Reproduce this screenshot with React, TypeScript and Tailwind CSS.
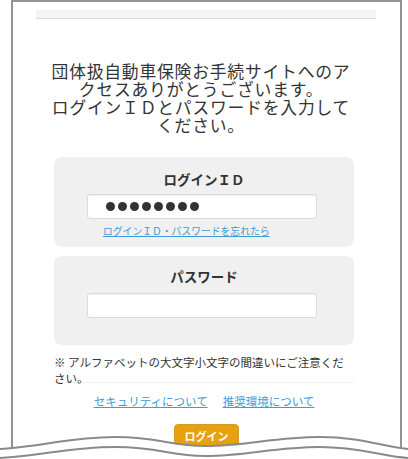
const PAGE_FONT = "font-['Noto_Sans_CJK_JP','Noto_Sans',sans-serif]";

const PasswordDots = ({ count }: { count: number }) => (
  <div className="flex items-center gap-[3px]">
    {Array.from({ length: count }).map((_, index) => (
      <span key={index} className="block h-[9px] w-[9px] rounded-full bg-[#333]" />
    ))}
  </div>
);

const TornEdge = () => (
  <svg
    className="absolute bottom-0 left-0"
    width="408"
    height="40"
    viewBox="0 419 408 40"
    fill="none"
  >
    <path
      d="M0 449 C40 447 70 437 115 437 C160 437 170 446 205 446 C245 446 275 437 320 437 C360 437 380 446 408 449 L408 460 L0 460 Z"
      fill="#fff"
    />
    <path
      d="M0 449 C40 447 70 437 115 437 C160 437 170 446 205 446 C245 446 275 437 320 437 C360 437 380 446 408 449"
      stroke="#8a8a8a"
      strokeWidth="2"
    />
    <path
      d="M0 458 C40 456 70 447 115 447 C160 447 170 456 205 456 C245 456 275 447 320 447 C360 447 380 456 408 458"
      stroke="#8a8a8a"
      strokeWidth="2"
    />
  </svg>
);

const GREETING =
  "団体扱自動車保険お手続サイトへのアクセスありがとうございます。\nログインＩＤとパスワードを入力してください。";

export default function App() {
  return (
    <div className={`relative h-[459px] w-[408px] overflow-hidden bg-white text-[#333] ${PAGE_FONT}`}>
      <div className="ml-[11px] h-[459px] w-[391px] border-x-2 border-t-2 border-[#939393]">
        <div className="ml-[23px] mt-[8px] h-[9px] w-[340px] border-b border-[#d9d9d9] bg-[#f5f5f5]" />

        <p className="ml-[37px] mt-[43px] w-[302px] whitespace-pre-line text-center text-[16.8px] leading-[18px] tracking-[0.8px]">
          {GREETING}
        </p>

        <div className="ml-[41px] mt-[23px] h-[90px] w-[300px] rounded-[8px] bg-[#f0f0f0] pt-[14px]">
          <p className="text-center text-[13.5px] font-bold leading-[16px]">ログインＩＤ</p>
          <div className="ml-[33px] mt-[7px] flex h-[25px] w-[230px] items-center rounded-[3px] border border-[#d5dbe0] bg-white pl-[18px] shadow-[inset_0_1px_1px_rgba(0,0,0,0.06)]">
            <PasswordDots count={8} />
          </div>
          <a className="ml-[49px] mt-[6px] block text-[9.8px] leading-[12px] text-[#3d9bd8] underline">
            ログインＩＤ・パスワードを忘れたら
          </a>
        </div>

        <div className="ml-[41px] mt-[9px] h-[89px] w-[300px] rounded-[8px] bg-[#f0f0f0] pt-[12px]">
          <p className="text-center text-[13.5px] font-bold leading-[16px]">パスワード</p>
          <div className="ml-[33px] mt-[9px] h-[25px] w-[230px] rounded-[3px] border border-[#d5dbe0] bg-white shadow-[inset_0_1px_1px_rgba(0,0,0,0.06)]" />
        </div>

        <p className="ml-[41px] mt-[9px] w-[300px] text-[11.5px] leading-[16px]">
          ※ アルファベットの大文字小文字の間違いにご注意ください。
        </p>
        <div className="ml-[41px] -mt-[4px] h-px w-[300px] bg-[#f0f0f0]" />

        <div className="ml-[41px] mt-[10px] flex w-[300px] justify-center gap-[15px] text-[11.5px] leading-[16px] text-[#3d9bd8]">
          <a className="underline">セキュリティについて</a>
          <a className="underline">推奨環境について</a>
        </div>

        <div className="ml-[161px] mt-[15px] h-[30px] w-[65px] rounded-[4px] border border-[#d49a2a] bg-[#e9a00e] pt-[3px] text-center text-[11px] font-bold leading-[16px] text-white">
          ログイン
        </div>
      </div>

      <TornEdge />
    </div>
  );
}
